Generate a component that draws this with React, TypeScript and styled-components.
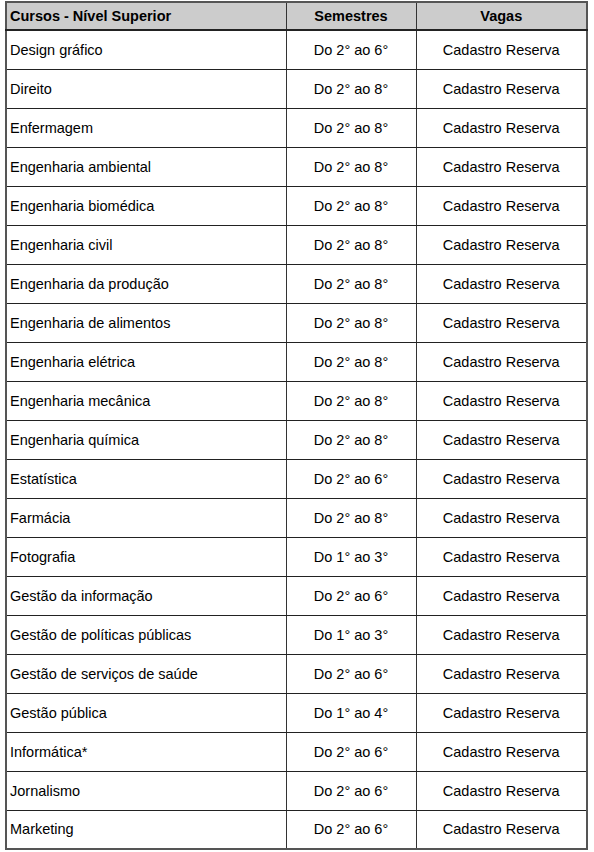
import React, { FC } from "react";
import styled, { createGlobalStyle } from "styled-components";

type Curso = {
  nome: string;
  semestres: string;
};

const cursos: Curso[] = [
  { nome: "Design gráfico", semestres: "Do 2° ao 6°" },
  { nome: "Direito", semestres: "Do 2° ao 8°" },
  { nome: "Enfermagem", semestres: "Do 2° ao 8°" },
  { nome: "Engenharia ambiental", semestres: "Do 2° ao 8°" },
  { nome: "Engenharia biomédica", semestres: "Do 2° ao 8°" },
  { nome: "Engenharia civil", semestres: "Do 2° ao 8°" },
  { nome: "Engenharia da produção", semestres: "Do 2° ao 8°" },
  { nome: "Engenharia de alimentos", semestres: "Do 2° ao 8°" },
  { nome: "Engenharia elétrica", semestres: "Do 2° ao 8°" },
  { nome: "Engenharia mecânica", semestres: "Do 2° ao 8°" },
  { nome: "Engenharia química", semestres: "Do 2° ao 8°" },
  { nome: "Estatística", semestres: "Do 2° ao 6°" },
  { nome: "Farmácia", semestres: "Do 2° ao 8°" },
  { nome: "Fotografia", semestres: "Do 1° ao 3°" },
  { nome: "Gestão da informação", semestres: "Do 2° ao 6°" },
  { nome: "Gestão de políticas públicas", semestres: "Do 1° ao 3°" },
  { nome: "Gestão de serviços de saúde", semestres: "Do 2° ao 6°" },
  { nome: "Gestão pública", semestres: "Do 1° ao 4°" },
  { nome: "Informática*", semestres: "Do 2° ao 6°" },
  { nome: "Jornalismo", semestres: "Do 2° ao 6°" },
  { nome: "Marketing", semestres: "Do 2° ao 6°" },
];

const App: FC = () => {
  return (
    <>
      <GlobalStyle />
      <SPage>
        <STable>
          <colgroup>
            <col style={{ width: 280 }} />
            <col style={{ width: 130 }} />
            <col />
          </colgroup>
          <thead>
            <tr>
              <SHead>Cursos - Nível Superior</SHead>
              <SHead $center>Semestres</SHead>
              <SHead $center>Vagas</SHead>
            </tr>
          </thead>
          <tbody>
            {cursos.map((c) => (
              <tr key={c.nome}>
                <SCell>{c.nome}</SCell>
                <SCell $center>{c.semestres}</SCell>
                <SCell $center>Cadastro Reserva</SCell>
              </tr>
            ))}
          </tbody>
        </STable>
      </SPage>
    </>
  );
};

const GlobalStyle = createGlobalStyle`
  body {
    margin: 0;
    background: #fff;
    font-family: "Liberation Sans", Arial, sans-serif;
    color: #000;
  }
`;

const SPage = styled.div`
  padding: 1px 0 0 5px;
`;

const STable = styled.table`
  border-collapse: collapse;
  width: 583px;
  table-layout: fixed;
  border: 2px solid #555;
`;

const SHead = styled.th<{ $center?: boolean }>`
  height: 26px;
  padding: 0 3px;
  background: #cccccc;
  font-size: 14.5px;
  font-weight: bold;
  text-align: ${(p) => (p.$center ? "center" : "left")};
  border: 1px solid #333;
  border-bottom: 2px solid #222;
`;

const SCell = styled.td<{ $center?: boolean }>`
  height: 39px;
  padding: 0 3px;
  font-size: 14.5px;
  text-align: ${(p) => (p.$center ? "center" : "left")};
  border: 1px solid #333;
  border-bottom: 1.5px solid #222;
  box-sizing: border-box;
`;

export default App;
